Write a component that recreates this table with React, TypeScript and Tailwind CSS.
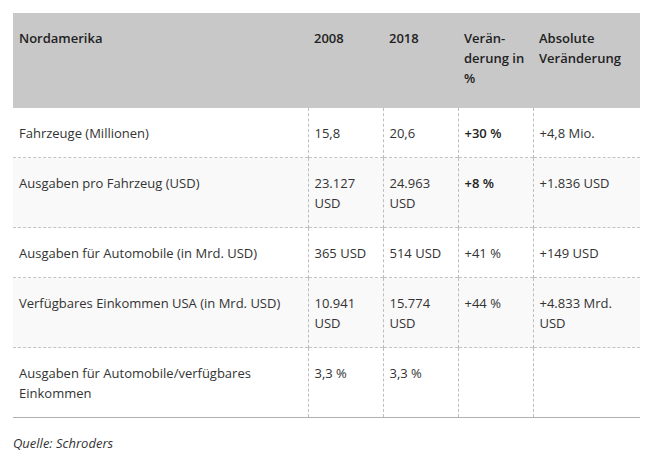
import React from 'react';

interface Row {
  label: string;
  v2008: string;
  v2018: string;
  pct: string;
  pctBold?: boolean;
  abs: string;
}

const rows: Row[] = [
  { label: 'Fahrzeuge (Millionen)', v2008: '15,8', v2018: '20,6', pct: '+30 %', pctBold: true, abs: '+4,8 Mio.' },
  { label: 'Ausgaben pro Fahrzeug (USD)', v2008: '23.127 USD', v2018: '24.963 USD', pct: '+8 %', pctBold: true, abs: '+1.836 USD' },
  { label: 'Ausgaben für Automobile (in Mrd. USD)', v2008: '365 USD', v2018: '514 USD', pct: '+41 %', abs: '+149 USD' },
  { label: 'Verfügbares Einkommen USA (in Mrd. USD)', v2008: '10.941 USD', v2018: '15.774 USD', pct: '+44 %', abs: '+4.833 Mrd. USD' },
  { label: 'Ausgaben für Automobile/verfügbares Einkommen', v2008: '3,3 %', v2018: '3,3 %', pct: '', abs: '' },
];

const cell = 'align-top px-[6px] pt-[15px] pb-[14px] leading-[20px]';
const divider = 'border-l border-dashed border-[#bdbdbd]';

export default function App() {
  return (
    <div
      className="w-[650px] h-[463px] bg-white text-[13px] text-[#333] px-[13px] pt-[13px]"
      style={{ fontFamily: '"Open Sans", "Noto Sans", sans-serif' }}
    >
      <table className="w-[627px] border-collapse table-fixed">
        <colgroup>
          <col className="w-[295px]" />
          <col className="w-[75px]" />
          <col className="w-[75px]" />
          <col className="w-[75px]" />
          <col className="w-[107px]" />
        </colgroup>
        <thead>
          <tr className="bg-[#c8c8c8] h-[95px] text-[#222]">
            <th className={`${cell} text-left font-semibold`}>Nordamerika</th>
            <th className={`${cell} text-left font-semibold`}>2008</th>
            <th className={`${cell} text-left font-semibold`}>2018</th>
            <th className={`${cell} text-left font-semibold hyphens-manual`}>Verän&shy;derung in %</th>
            <th className={`${cell} text-left font-semibold`}>Absolute Veränderung</th>
          </tr>
        </thead>
        <tbody>
          {rows.map((r, i) => (
            <tr
              key={i}
              className={`${i % 2 === 1 ? 'bg-[#f9f9f9]' : 'bg-white'} ${
                i === rows.length - 1 ? 'border-b border-solid border-[#b0b0b0]' : 'border-b border-dashed border-[#c4c4c4]'
              }`}
            >
              <td className={cell}>{r.label}</td>
              <td className={`${cell} ${divider}`}>{r.v2008}</td>
              <td className={`${cell} ${divider}`}>{r.v2018}</td>
              <td className={`${cell} ${divider} ${r.pctBold ? 'font-semibold text-[#222]' : ''}`}>{r.pct}</td>
              <td className={`${cell} ${divider}`}>{r.abs}</td>
            </tr>
          ))}
        </tbody>
      </table>
      <p className="mt-[16px] italic text-[13px] text-[#333]">Quelle: Schroders</p>
    </div>
  );
}
